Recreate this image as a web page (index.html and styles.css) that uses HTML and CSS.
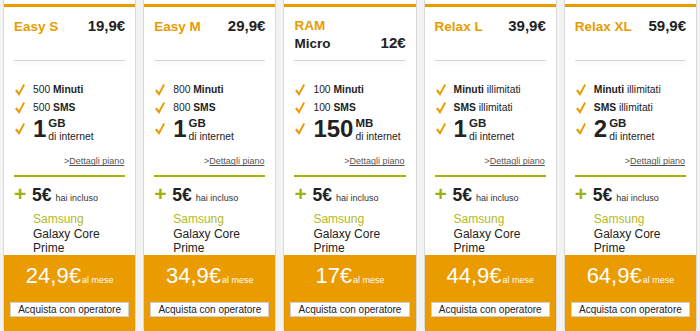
FILE: index.html
```html
<!DOCTYPE html>
<html lang="it">
<head>
<meta charset="utf-8">
<title>Offerte</title>
<link rel="stylesheet" href="styles.css">
</head>
<body>
<div class="plans">

  <div class="card">
    <div class="bar"></div>
    <div class="head">
      <div class="row"><span class="title">Easy S</span><span class="price">19,9€</span></div>
    </div>
    <div class="divider"></div>
    <ul class="features">
      <li class="feat"><svg class="check" viewBox="0 0 10 12"><path d="M0 6.8 L1.9 5.6 L3.9 8.3 L8.4 0 L10 0.9 L4.1 12 Z"/></svg><span>500 <b>Minuti</b></span></li>
      <li class="feat"><svg class="check" viewBox="0 0 10 12"><path d="M0 6.8 L1.9 5.6 L3.9 8.3 L8.4 0 L10 0.9 L4.1 12 Z"/></svg><span>500 <b>SMS</b></span></li>
      <li class="feat big"><svg class="check" viewBox="0 0 10 12"><path d="M0 6.8 L1.9 5.6 L3.9 8.3 L8.4 0 L10 0.9 L4.1 12 Z"/></svg><span class="num">1</span><span class="unit"><b>GB</b><br>di internet</span></li>
    </ul>
    <a class="details" href="#">&gt;<u>Dettagli piano</u></a>
    <div class="green-line"></div>
    <div class="bonus"><span class="plus">+</span><span class="amount">5€</span><span class="incl">hai incluso</span></div>
    <div class="phone"><span class="brand">Samsung</span><br>Galaxy Core<br>Prime</div>
    <div class="buy">
      <div class="total"><span class="big-price">24,9€</span><span class="per">al mese</span></div>
      <button class="btn">Acquista con operatore</button>
    </div>
  </div>

  <div class="card">
    <div class="bar"></div>
    <div class="head">
      <div class="row"><span class="title">Easy M</span><span class="price">29,9€</span></div>
    </div>
    <div class="divider"></div>
    <ul class="features">
      <li class="feat"><svg class="check" viewBox="0 0 10 12"><path d="M0 6.8 L1.9 5.6 L3.9 8.3 L8.4 0 L10 0.9 L4.1 12 Z"/></svg><span>800 <b>Minuti</b></span></li>
      <li class="feat"><svg class="check" viewBox="0 0 10 12"><path d="M0 6.8 L1.9 5.6 L3.9 8.3 L8.4 0 L10 0.9 L4.1 12 Z"/></svg><span>800 <b>SMS</b></span></li>
      <li class="feat big"><svg class="check" viewBox="0 0 10 12"><path d="M0 6.8 L1.9 5.6 L3.9 8.3 L8.4 0 L10 0.9 L4.1 12 Z"/></svg><span class="num">1</span><span class="unit"><b>GB</b><br>di internet</span></li>
    </ul>
    <a class="details" href="#">&gt;<u>Dettagli piano</u></a>
    <div class="green-line"></div>
    <div class="bonus"><span class="plus">+</span><span class="amount">5€</span><span class="incl">hai incluso</span></div>
    <div class="phone"><span class="brand">Samsung</span><br>Galaxy Core<br>Prime</div>
    <div class="buy">
      <div class="total"><span class="big-price">34,9€</span><span class="per">al mese</span></div>
      <button class="btn">Acquista con operatore</button>
    </div>
  </div>

  <div class="card">
    <div class="bar"></div>
    <div class="head">
      <div class="row"><span class="title">RAM</span></div>
      <div class="row"><span class="title dark">Micro</span><span class="price">12€</span></div>
    </div>
    <div class="divider"></div>
    <ul class="features">
      <li class="feat"><svg class="check" viewBox="0 0 10 12"><path d="M0 6.8 L1.9 5.6 L3.9 8.3 L8.4 0 L10 0.9 L4.1 12 Z"/></svg><span>100 <b>Minuti</b></span></li>
      <li class="feat"><svg class="check" viewBox="0 0 10 12"><path d="M0 6.8 L1.9 5.6 L3.9 8.3 L8.4 0 L10 0.9 L4.1 12 Z"/></svg><span>100 <b>SMS</b></span></li>
      <li class="feat big"><svg class="check" viewBox="0 0 10 12"><path d="M0 6.8 L1.9 5.6 L3.9 8.3 L8.4 0 L10 0.9 L4.1 12 Z"/></svg><span class="num">150</span><span class="unit"><b>MB</b><br>di internet</span></li>
    </ul>
    <a class="details" href="#">&gt;<u>Dettagli piano</u></a>
    <div class="green-line"></div>
    <div class="bonus"><span class="plus">+</span><span class="amount">5€</span><span class="incl">hai incluso</span></div>
    <div class="phone"><span class="brand">Samsung</span><br>Galaxy Core<br>Prime</div>
    <div class="buy">
      <div class="total"><span class="big-price">17€</span><span class="per">al mese</span></div>
      <button class="btn">Acquista con operatore</button>
    </div>
  </div>

  <div class="card">
    <div class="bar"></div>
    <div class="head">
      <div class="row"><span class="title">Relax L</span><span class="price">39,9€</span></div>
    </div>
    <div class="divider"></div>
    <ul class="features">
      <li class="feat"><svg class="check" viewBox="0 0 10 12"><path d="M0 6.8 L1.9 5.6 L3.9 8.3 L8.4 0 L10 0.9 L4.1 12 Z"/></svg><span><b>Minuti</b> illimitati</span></li>
      <li class="feat"><svg class="check" viewBox="0 0 10 12"><path d="M0 6.8 L1.9 5.6 L3.9 8.3 L8.4 0 L10 0.9 L4.1 12 Z"/></svg><span><b>SMS</b> illimitati</span></li>
      <li class="feat big"><svg class="check" viewBox="0 0 10 12"><path d="M0 6.8 L1.9 5.6 L3.9 8.3 L8.4 0 L10 0.9 L4.1 12 Z"/></svg><span class="num">1</span><span class="unit"><b>GB</b><br>di internet</span></li>
    </ul>
    <a class="details" href="#">&gt;<u>Dettagli piano</u></a>
    <div class="green-line"></div>
    <div class="bonus"><span class="plus">+</span><span class="amount">5€</span><span class="incl">hai incluso</span></div>
    <div class="phone"><span class="brand">Samsung</span><br>Galaxy Core<br>Prime</div>
    <div class="buy">
      <div class="total"><span class="big-price">44,9€</span><span class="per">al mese</span></div>
      <button class="btn">Acquista con operatore</button>
    </div>
  </div>

  <div class="card">
    <div class="bar"></div>
    <div class="head">
      <div class="row"><span class="title">Relax XL</span><span class="price">59,9€</span></div>
    </div>
    <div class="divider"></div>
    <ul class="features">
      <li class="feat"><svg class="check" viewBox="0 0 10 12"><path d="M0 6.8 L1.9 5.6 L3.9 8.3 L8.4 0 L10 0.9 L4.1 12 Z"/></svg><span><b>Minuti</b> illimitati</span></li>
      <li class="feat"><svg class="check" viewBox="0 0 10 12"><path d="M0 6.8 L1.9 5.6 L3.9 8.3 L8.4 0 L10 0.9 L4.1 12 Z"/></svg><span><b>SMS</b> illimitati</span></li>
      <li class="feat big"><svg class="check" viewBox="0 0 10 12"><path d="M0 6.8 L1.9 5.6 L3.9 8.3 L8.4 0 L10 0.9 L4.1 12 Z"/></svg><span class="num">2</span><span class="unit"><b>GB</b><br>di internet</span></li>
    </ul>
    <a class="details" href="#">&gt;<u>Dettagli piano</u></a>
    <div class="green-line"></div>
    <div class="bonus"><span class="plus">+</span><span class="amount">5€</span><span class="incl">hai incluso</span></div>
    <div class="phone"><span class="brand">Samsung</span><br>Galaxy Core<br>Prime</div>
    <div class="buy">
      <div class="total"><span class="big-price">64,9€</span><span class="per">al mese</span></div>
      <button class="btn">Acquista con operatore</button>
    </div>
  </div>

</div>
</body>
</html>
```

FILE: styles.css
```css
* { box-sizing: border-box; }
html, body {
  margin: 0;
  padding: 0;
  background: #f3f3f3;
  font-family: "Liberation Sans", Arial, sans-serif;
  color: #222;
}
.plans {
  display: flex;
  gap: 7px;
  padding: 0 3px 0 3px;
  height: 331px;
}
.card {
  flex: 1 1 0;
  display: flex;
  flex-direction: column;
  background: #fff;
  border: 1px solid #d9d9d9;
  border-top: none;
  padding-top: 4px;
  height: 329px;
}
.bar {
  height: 3px;
  background: #ea9b00;
  flex: none;
}
.head {
  height: 53px;
  padding: 10px 10px 0;
  flex: none;
}
.row {
  display: flex;
  justify-content: space-between;
  align-items: baseline;
  line-height: 17px;
}
.title {
  font-size: 13.5px;
  font-weight: bold;
  color: #ea9b00;
}
.title.dark { color: #222; }
.price {
  font-size: 15px;
  font-weight: bold;
  color: #222;
}
.divider {
  margin: 0 10px;
  height: 1px;
  flex: none;
  background: #d6d6d6;
  box-shadow: 0 2px 4px rgba(0, 0, 0, 0.12);
}
.features {
  list-style: none;
  margin: 0;
  padding: 20px 10px 0 11px;
  flex: none;
}
.feat {
  display: flex;
  align-items: center;
  height: 17.7px;
  font-size: 10.3px;
  line-height: 17.7px;
}
.check {
  width: 10px;
  height: 12px;
  fill: #ea9b00;
  margin-right: 8px;
  flex: none;
}
.feat.big {
  height: 25px;
  margin-top: 1px;
  align-items: flex-start;
}
.feat.big .check {
  margin-top: 6px;
}
.num {
  font-size: 24px;
  font-weight: bold;
  line-height: 23px;
  margin-right: 2px;
}
.unit {
  font-size: 10.3px;
  line-height: 13px;
}
.unit b {
  font-size: 11.5px;
  line-height: 12px;
}
.details {
  display: block;
  text-align: right;
  font-size: 9px;
  line-height: 12px;
  color: #555;
  text-decoration: none;
  margin: 13px 11px 0 0;
  flex: none;
}
.green-line {
  margin: 8px 10px 0;
  height: 2px;
  flex: none;
  background: #a7b400;
}
.bonus {
  display: flex;
  align-items: baseline;
  margin: 7px 10px 0;
  line-height: 20px;
  flex: none;
}
.plus {
  font-size: 21px;
  font-weight: bold;
  color: #9fb012;
  width: 18px;
}
.amount {
  font-size: 17.5px;
  font-weight: bold;
  margin-right: 4px;
}
.incl {
  font-size: 9px;
  color: #333;
}
.phone {
  margin: 4px 10px 0 29px;
  font-size: 12px;
  line-height: 14.5px;
  height: 43px;
  color: #222;
  flex: none;
}
.brand { color: #b2ba25; }
.buy {
  margin-top: auto;
  background: #ea9b00;
  padding: 8px 6px 14px;
  display: flex;
  flex-direction: column;
  align-items: center;
  height: 76px;
  flex: none;
}
.total {
  line-height: 26px;
  color: #fff;
  white-space: nowrap;
}
.big-price {
  font-size: 22px;
}
.per {
  font-size: 9px;
  margin-left: 1px;
}
.btn {
  margin-top: 9px;
  width: 100%;
  height: 19px;
  background: #fff;
  border: 1px solid #d0d0d0;
  font-family: inherit;
  font-size: 10px;
  color: #222;
  padding: 0;
}
```
